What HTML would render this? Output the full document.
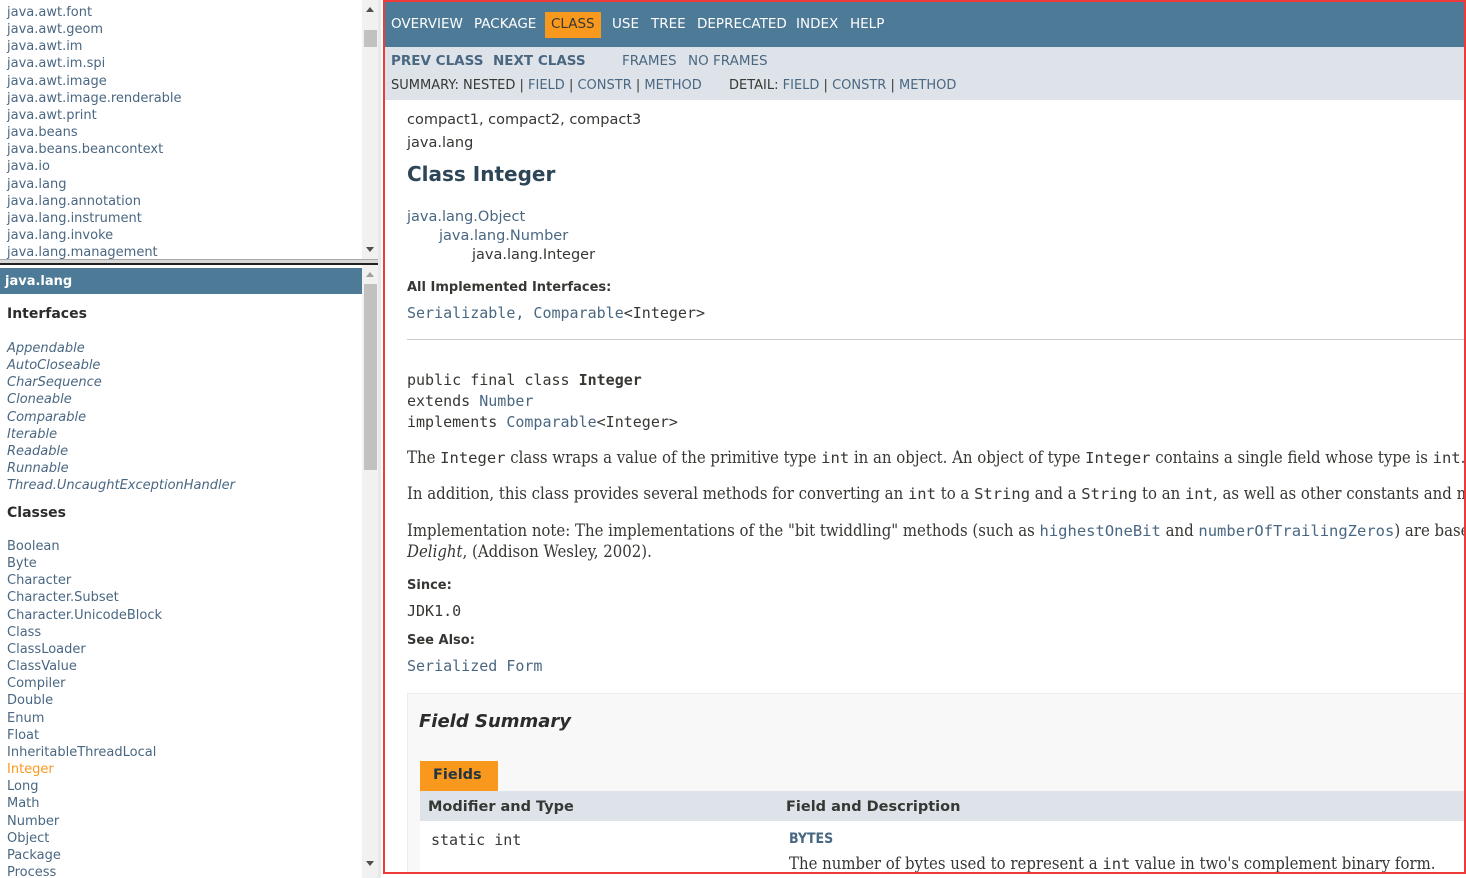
<!DOCTYPE html>
<html><head><meta charset="utf-8"><style>
*{margin:0;padding:0;box-sizing:border-box}
body{width:1466px;height:878px;overflow:hidden;background:#fff;font-family:"DejaVu Sans","Liberation Sans",sans-serif;color:#353833;position:relative}
a{color:#4a6782;text-decoration:none}
.pane{position:absolute;left:0;width:362px;overflow:hidden}
.sb{position:absolute;left:362px;width:16px;background:#f1f1f1}
.thumb{position:absolute;left:2px;width:13px;background:#c1c1c1}
.arr{position:absolute;left:4px;width:0;height:0;border-left:4px solid transparent;border-right:4px solid transparent}
.top div{font-size:13px;line-height:17.15px;padding-left:7px;color:#4a6782}
.bot .item{font-size:13px;line-height:17.15px;padding-left:7px;color:#4a6782}
.bot .it{font-style:italic}
.bot h3{font-size:14px;font-weight:bold;color:#2c2c2c;padding-left:7px}
#main{position:absolute;left:383px;top:0;width:1083px;height:874px;border:2px solid #ee3a3a;overflow:hidden}
.nav{height:45px;background:#4d7a97;color:#fff;font-size:13.5px;padding-left:6px;position:relative}
.nav span{position:absolute;top:14px}
.sub{height:53px;background:#dee3e9;font-size:13px;color:#353833;position:relative}
.sub span{position:absolute}
.mono{font-family:"DejaVu Sans Mono","Liberation Mono",monospace}
.ser{font-family:"DejaVu Serif Condensed","DejaVu Serif","Liberation Serif",serif;font-stretch:condensed}
.abs{position:absolute;white-space:nowrap}
.ser .mono{font-size:15.5px}
</style></head><body>

<div class="pane top" style="top:4px;height:256px">
<div>java.awt.font</div><div>java.awt.geom</div><div>java.awt.im</div><div>java.awt.im.spi</div><div>java.awt.image</div><div>java.awt.image.renderable</div><div>java.awt.print</div><div>java.beans</div><div>java.beans.beancontext</div><div>java.io</div><div>java.lang</div><div>java.lang.annotation</div><div>java.lang.instrument</div><div>java.lang.invoke</div><div>java.lang.management</div>
</div>
<div class="sb" style="top:0;height:259px"><div class="arr" style="top:7px;border-bottom:5px solid #505050"></div><div class="thumb" style="top:30px;height:17px"></div><div class="arr" style="top:247px;border-top:5px solid #505050"></div></div>
<div style="position:absolute;left:0;top:259px;width:380px;height:6px;background:#d8d8d8;border-top:1px solid #aaa;border-bottom:2px solid #222"></div>
<div class="sb" style="left:378px;top:0;width:3px;height:878px;background:#e8e8e8"></div>

<div class="pane bot" style="top:265px;height:613px">
<div style="position:absolute;top:3px;left:0;width:362px;height:26px;background:#4d7a97;color:#fff;font-weight:bold;font-size:13px;line-height:28px;padding-left:5px">java.lang</div>
<h3 class="abs" style="top:41px">Interfaces</h3>
<div class="abs" style="top:75px;left:0">
<div class="item it">Appendable</div><div class="item it">AutoCloseable</div><div class="item it">CharSequence</div><div class="item it">Cloneable</div><div class="item it">Comparable</div><div class="item it">Iterable</div><div class="item it">Readable</div><div class="item it">Runnable</div><div class="item it">Thread.UncaughtExceptionHandler</div>
</div>
<h3 class="abs" style="top:240px">Classes</h3>
<div class="abs" style="top:273px;left:0">
<div class="item">Boolean</div><div class="item">Byte</div><div class="item">Character</div><div class="item">Character.Subset</div><div class="item">Character.UnicodeBlock</div><div class="item">Class</div><div class="item">ClassLoader</div><div class="item">ClassValue</div><div class="item">Compiler</div><div class="item">Double</div><div class="item">Enum</div><div class="item">Float</div><div class="item">InheritableThreadLocal</div><div class="item" style="color:#f8981d">Integer</div><div class="item">Long</div><div class="item">Math</div><div class="item">Number</div><div class="item">Object</div><div class="item">Package</div><div class="item">Process</div>
</div>
</div>
<div class="sb" style="top:265px;height:613px"><div class="arr" style="top:7px;border-bottom:5px solid #a0a0a0"></div><div class="thumb" style="top:19px;height:186px"></div><div class="arr" style="top:596px;border-top:5px solid #505050"></div></div>

<div id="main">
<div class="nav">
<span style="left:6px">OVERVIEW</span><span style="left:89px">PACKAGE</span>
<span style="left:160px;top:10px;background:#f8981d;color:#353833;padding:4px 6px;height:26px">CLASS</span>
<span style="left:227px">USE</span><span style="left:266px">TREE</span><span style="left:312px">DEPRECATED</span><span style="left:411px">INDEX</span><span style="left:465px">HELP</span>
</div>
<div class="sub">
<span style="left:6px;top:6px;font-weight:bold;color:#4a6782;font-size:13.5px">PREV CLASS</span><span style="left:108px;top:6px;font-weight:bold;color:#4a6782;font-size:13.5px">NEXT CLASS</span>
<span style="left:237px;top:6px;color:#4a6782;font-size:13.5px">FRAMES</span><span style="left:303px;top:6px;color:#4a6782;font-size:13.5px">NO FRAMES</span>
<span style="left:6px;top:31px">SUMMARY: NESTED | <a>FIELD</a> | <a>CONSTR</a> | <a>METHOD</a></span>
<span style="left:344px;top:31px">DETAIL: <a>FIELD</a> | <a>CONSTR</a> | <a>METHOD</a></span>
</div>
<div class="abs" style="left:22px;top:110px;font-size:14.5px">compact1, compact2, compact3</div>
<div class="abs" style="left:22px;top:133px;font-size:14.5px">java.lang</div>
<div class="abs" style="left:22px;top:160px;font-size:20px;font-weight:bold;color:#2c4557">Class Integer</div>
<div class="abs" style="left:22px;top:207px;font-size:14.5px;color:#4a6782">java.lang.Object</div>
<div class="abs" style="left:54px;top:226px;font-size:14.5px;color:#4a6782">java.lang.Number</div>
<div class="abs" style="left:87px;top:245px;font-size:14.5px">java.lang.Integer</div>
<div class="abs" style="left:22px;top:278px;font-size:13px;font-weight:bold">All Implemented Interfaces:</div>
<div class="abs mono" style="left:22px;top:302px;font-size:15px;color:#4a6782">Serializable, Comparable<span style="color:#353833">&lt;Integer&gt;</span></div>
<div style="position:absolute;left:22px;top:337px;width:1080px;height:1px;background:#ccc"></div>
<div class="abs mono" style="left:22px;top:369px;font-size:15px">public final class <b>Integer</b></div>
<div class="abs mono" style="left:22px;top:390px;font-size:15px">extends <a>Number</a></div>
<div class="abs mono" style="left:22px;top:411px;font-size:15px">implements <a>Comparable</a>&lt;Integer&gt;</div>
<div class="abs ser" style="left:22px;top:446px;font-size:16.6px">The <span class="mono">Integer</span> class wraps a value of the primitive type <span class="mono">int</span> in an object. An object of type <span class="mono">Integer</span> contains a single field whose type is <span class="mono">int</span>.</div>
<div class="abs ser" style="left:22px;top:482px;font-size:16.6px">In addition, this class provides several methods for converting an <span class="mono">int</span> to a <span class="mono">String</span> and a <span class="mono">String</span> to an <span class="mono">int</span>, as well as other constants and methods.</div>
<div class="abs ser" style="left:22px;top:519px;font-size:16.6px">Implementation note: The implementations of the "bit twiddling" methods (such as <a class="mono">highestOneBit</a> and <a class="mono">numberOfTrailingZeros</a>) are based on material from Henry S. Warren</div>
<div class="abs ser" style="left:22px;top:540px;font-size:16.6px"><i>Delight</i>, (Addison Wesley, 2002).</div>
<div class="abs" style="left:22px;top:576px;font-size:13px;font-weight:bold">Since:</div>
<div class="abs mono" style="left:22px;top:600px;font-size:15px">JDK1.0</div>
<div class="abs" style="left:22px;top:631px;font-size:13px;font-weight:bold">See Also:</div>
<div class="abs mono" style="left:22px;top:655px;font-size:15px;color:#4a6782">Serialized Form</div>
<div style="position:absolute;left:22px;top:691px;width:1080px;height:200px;background:#f8f8f8;border:1px solid #ededed"></div>
<div class="abs" style="left:34px;top:709px;font-size:18px;font-weight:bold;font-style:italic;color:#2c2c2c">Field Summary</div>
<div class="abs" style="left:35px;top:759px;width:78px;height:30px;background:#f8981d;font-weight:bold;font-size:14.5px;padding:6px 0 0 13px;color:#253441">Fields</div>
<div style="position:absolute;left:35px;top:789px;width:1060px;height:30px;background:#dee3e9"></div>
<div class="abs" style="left:43px;top:797px;font-size:14.5px;font-weight:bold">Modifier and Type</div>
<div class="abs" style="left:401px;top:797px;font-size:14.5px;font-weight:bold">Field and Description</div>
<div style="position:absolute;left:35px;top:819px;width:1060px;height:60px;background:#fff"></div>
<div class="abs mono" style="left:46px;top:829px;font-size:15px">static int</div>
<div class="abs" style="left:404px;top:829px;font-size:14px;font-weight:bold;color:#4a6782;font-family:'DejaVu Sans Condensed','DejaVu Sans',sans-serif">BYTES</div>
<div class="abs ser" style="left:404px;top:852px;font-size:16.6px">The number of bytes used to represent a <span class="mono">int</span> value in two's complement binary form.</div>
</div>
</body></html>
